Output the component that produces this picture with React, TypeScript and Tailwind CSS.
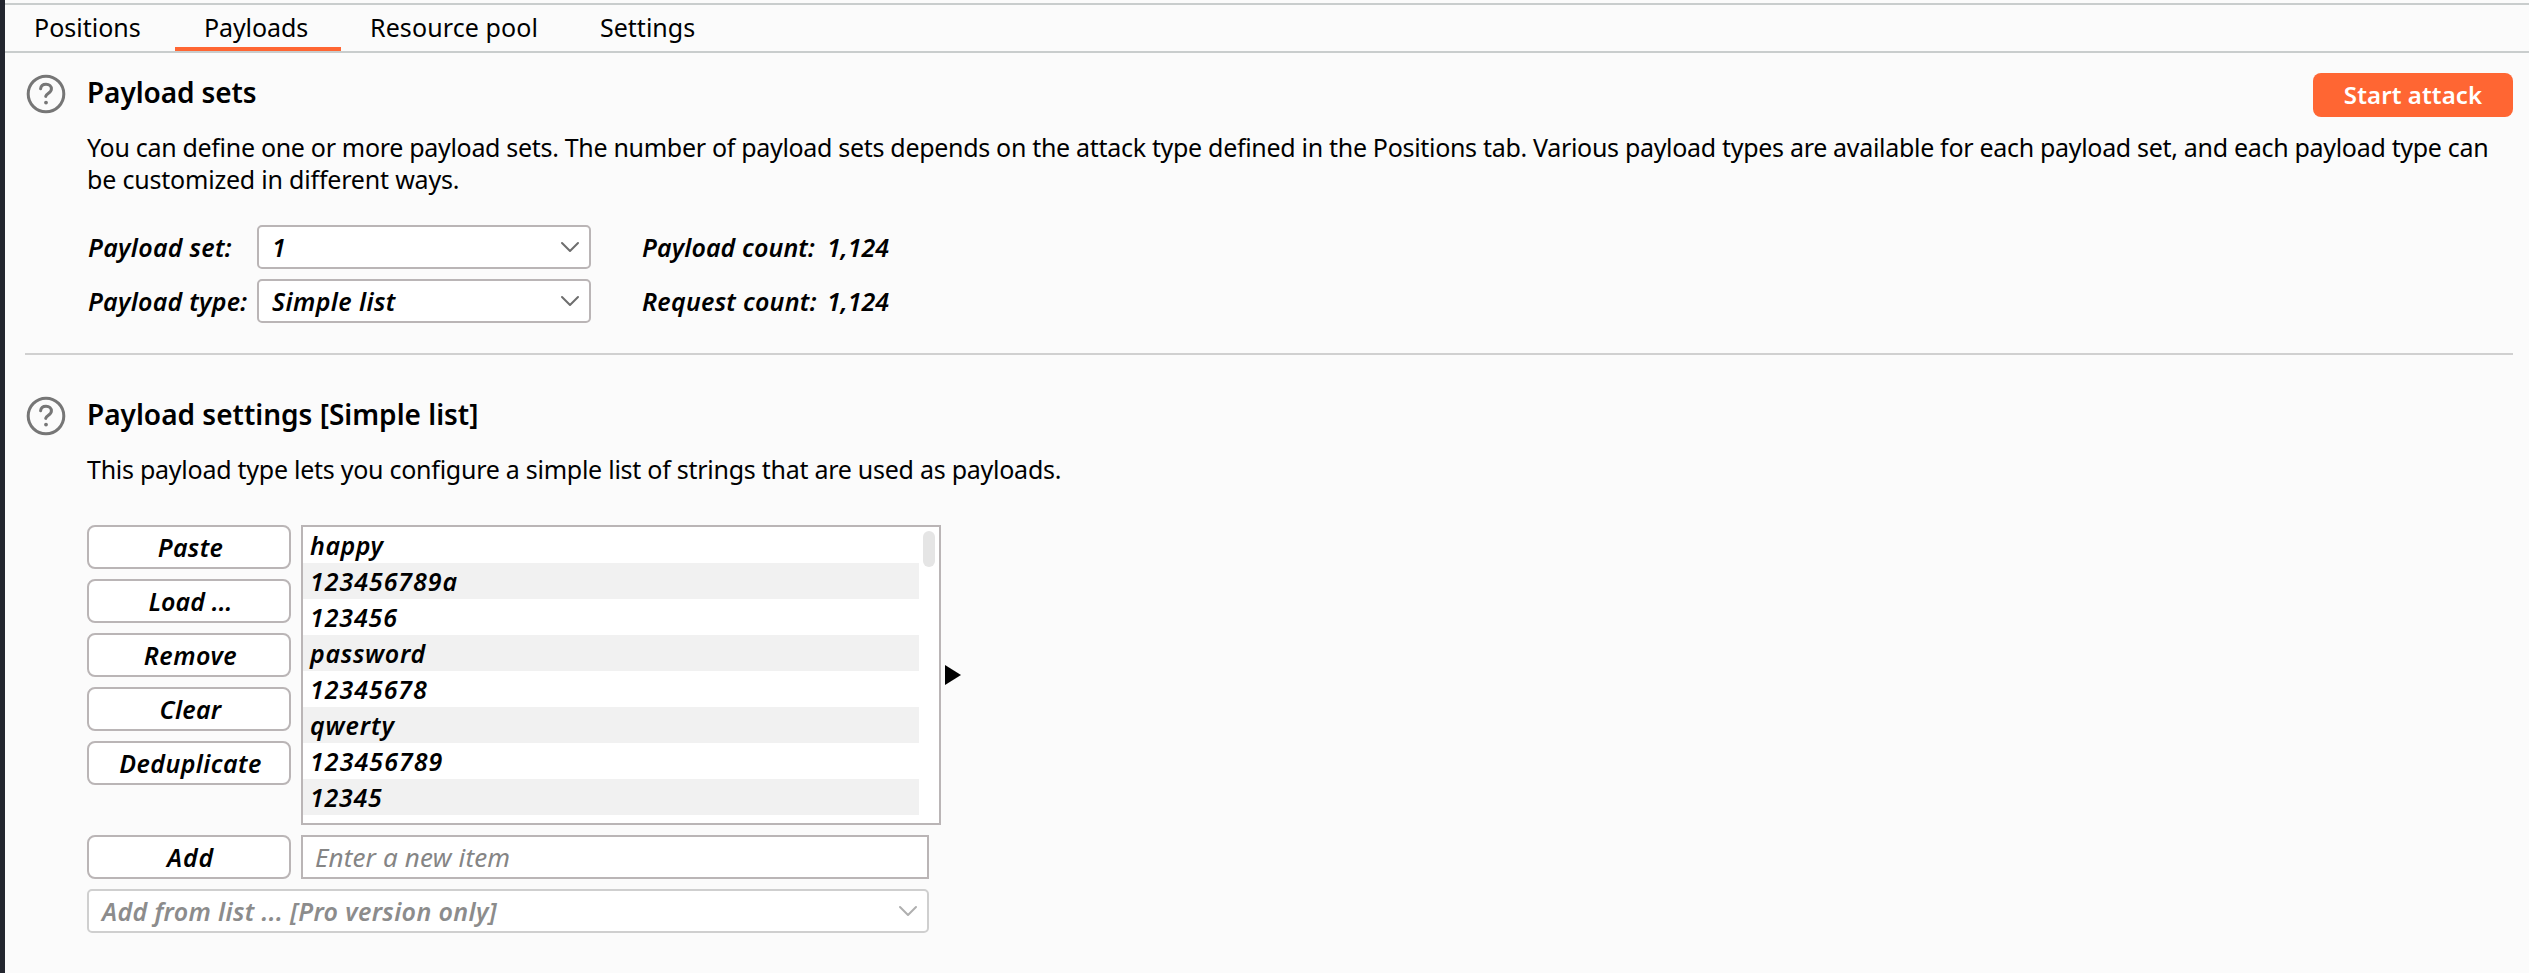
const rows: [string, string][] = [
  ["happy", "tracking-[0.5px]"],
  ["123456789a", "tracking-[0.95px]"],
  ["123456", "tracking-[0.85px]"],
  ["password", "tracking-[0.7px]"],
  ["12345678", "tracking-[0.95px]"],
  ["qwerty", "tracking-[0.9px]"],
  ["123456789", "tracking-[1.05px]"],
  ["12345", "tracking-[0.75px]"],
];

function HelpIcon() {
  return (
    <svg width="40" height="40" viewBox="0 0 40 40" fill="none" stroke="#767676" strokeWidth="3" className="shrink-0">
      <circle cx="20" cy="20" r="17.8" />
      <path d="M14.6 14.8C15 11.6 17.4 10.3 20 10.3C23.4 10.3 25.4 12.4 25.4 15.1C25.4 19 20.4 19.2 19.7 22.4" strokeLinecap="round" />
      <circle cx="20" cy="28.6" r="1.9" fill="#767676" stroke="none" />
    </svg>
  );
}

function Chevron({ color }: { color: string }) {
  return (
    <svg width="20" height="12" viewBox="0 0 20 12" fill="none" stroke={color} strokeWidth="2" strokeLinecap="round" strokeLinejoin="round">
      <path d="M2 2L10 10L18 2" />
    </svg>
  );
}

function Select({ value }: { value: string }) {
  return (
    <div className="flex h-11 w-[334px] items-center justify-between rounded-[5px] border-2 border-[#bab5b6] bg-white pr-[9px] pl-[13px]">
      <span className="tracking-[0.4px]">{value}</span>
      <Chevron color="#6e6e6e" />
    </div>
  );
}

function Button({ label, track }: { label: string; track: string }) {
  return (
    <button className="flex h-11 w-[204px] items-center justify-center rounded-lg border-2 border-[#bab5b6] bg-white pl-[3px] font-semibold italic">
      <span className={track}>{label}</span>
    </button>
  );
}

export default function App() {
  return (
    <div className="h-[973px] w-[2529px] overflow-hidden border-l-[5px] border-[#23262f] bg-[#fbfbfb] pt-[3px] font-['Noto_Sans',sans-serif] text-[25px] leading-8 text-black">
      <nav className="flex h-[50px] border-y-2 border-[#c9cdcd]">
        <div className="w-[170px] pt-[6px] pl-[29px]">Positions</div>
        <div className="w-[166px] border-b-4 border-[#ff6633] pt-[6px] pl-[29px] tracking-[-0.1px]">Payloads</div>
        <div className="w-[228px] pt-[6px] pl-[29px] tracking-[0.1px]">Resource pool</div>
        <div className="w-[158px] pt-[6px] pl-[31px]">Settings</div>
      </nav>

      <section className="mr-4 ml-5 flex h-[302px] border-b-2 border-[#d0d0d0] pt-[20px]">
        <div className="w-[62px] shrink-0 pt-px pl-px"><HelpIcon /></div>
        <div className="grow">
          <div className="flex h-[44px] items-start justify-between">
            <h2 className="pt-[3px] text-[28px] font-semibold tracking-[-0.1px]">Payload sets</h2>
            <button className="h-11 w-[200px] rounded-lg bg-[#ff6633] text-[24px] font-semibold tracking-[0.1px] text-white">Start attack</button>
          </div>
          <p className="pt-[14px] tracking-[-0.31px] whitespace-nowrap">
            You can define one or more payload sets. The number of payload sets depends on the attack type defined in the Positions tab. Various payload types are available for each payload set, and each payload type can<br />
            <span className="tracking-[-0.2px]">be customized in different ways.</span>
          </p>
          <div className="grid grid-cols-[170px_385px_185px_auto] items-center gap-y-2.5 pt-[30px] font-semibold italic">
            <span className="pl-px tracking-[0.3px]">Payload set:</span>
            <Select value="1" />
            <span className="tracking-[0.1px]">Payload count:</span>
            <span>1,124</span>
            <span className="pl-px tracking-[0.25px]">Payload type:</span>
            <Select value="Simple list" />
            <span className="tracking-[0.25px]">Request count:</span>
            <span>1,124</span>
          </div>
        </div>
      </section>

      <section className="mr-4 ml-5 flex pt-[40px]">
        <div className="w-[62px] shrink-0 pt-px pl-px"><HelpIcon /></div>
        <div className="grow">
          <h2 className="h-[44px] pt-[3px] text-[28px] font-semibold">Payload settings [Simple list]</h2>
          <p className="pt-[14px] tracking-[-0.26px]">This payload type lets you configure a simple list of strings that are used as payloads.</p>

          <div className="flex items-center pt-[40px]">
            <div className="flex flex-col gap-2.5 self-start">
              <Button label="Paste" track="tracking-[0.3px]" />
              <Button label="Load ..." track="tracking-[0.1px]" />
              <Button label="Remove" track="tracking-[0.5px]" />
              <Button label="Clear" track="tracking-[0.3px]" />
              <Button label="Deduplicate" track="tracking-[0.4px]" />
            </div>
            <div className="ml-2.5 flex h-[300px] w-[640px] justify-between border-2 border-[#bab5b6] bg-white pr-[4px] font-semibold italic">
              <ul className="w-[616px]">
                {rows.map(([text, track]) => (
                  <li key={text} className="h-9 pl-[7px] leading-9 even:bg-[#f1f1f1]">
                    <span className={track}>{text}</span>
                  </li>
                ))}
              </ul>
              <div className="mt-1 h-9 w-3 rounded-full bg-[#e5e5e5]" />
            </div>
            <svg width="16" height="20" viewBox="0 0 16 20" className="ml-1"><path d="M0 0L16 10L0 20Z" fill="#000" /></svg>
          </div>

          <div className="flex gap-2.5 pt-2.5">
            <Button label="Add" track="tracking-[0.8px]" />
            <div className="flex h-11 w-[628px] items-center border-2 border-[#bab5b6] bg-white pl-[12px] text-[26px] tracking-[0.15px] text-[#858585] italic">Enter a new item</div>
          </div>
          <div className="mt-2.5 flex h-11 w-[842px] items-center justify-between rounded-[5px] border-2 border-[#cfcfcf] bg-white pr-[9px] pl-[13px] font-semibold text-[#8c8c8c] italic">
            <span className="tracking-[0.35px]">Add from list ... [Pro version only]</span>
            <Chevron color="#afafaf" />
          </div>
        </div>
      </section>
    </div>
  );
}
